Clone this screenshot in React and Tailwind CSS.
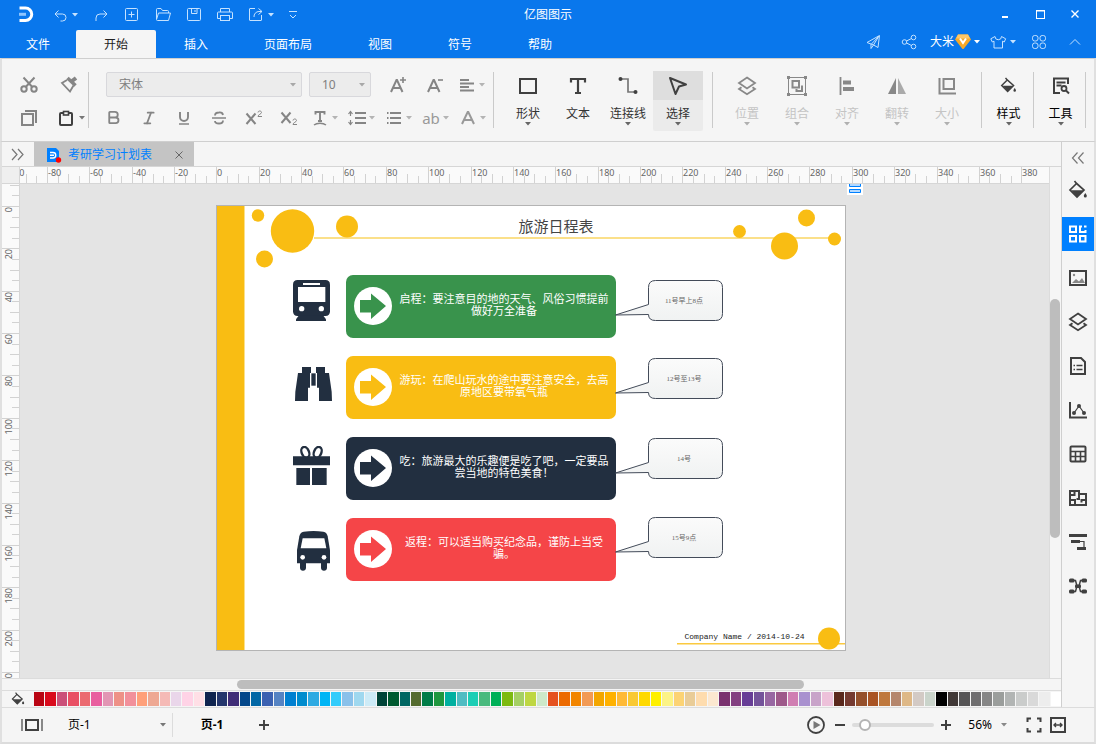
import { useState } from "react";
import { Bold, Italic, Type } from "lucide-react";

const Icon = ({ size = 20, w, h, sw = 1, children }) => (
  <svg
    width={w || size}
    height={h || size}
    viewBox={`0 0 ${w || size} ${h || size}`}
    fill="none"
    stroke="currentColor"
    strokeWidth={sw}
    className="shrink-0"
    aria-hidden="true"
  >
    {children}
  </svg>
);

const Caret = () => (
  <svg width="6" height="4" viewBox="0 0 6 4" className="shrink-0" aria-hidden="true">
    <path d="M0 0h6L3 3.6z" fill="currentColor" />
  </svg>
);

const BucketIcon = ({ size = 20 }) => (
  <svg width={size} height={size} viewBox="0 0 20 20" fill="none" className="shrink-0" aria-hidden="true">
    <path d="M6.500 1l2 2.500M7.500 2.500 16 10 9 17 2 10l6.500-6.500" stroke="currentColor" strokeWidth="1.7" />
    <path d="M3 10.200h12.500L9 17z" fill="currentColor" />
    <path d="M17.300 13c1 1.400 1.500 2 1.500 2.900a1.500 1.500 0 0 1-3 0c0-.9.5-1.500 1.500-2.900z" fill="currentColor" />
  </svg>
);

const LayersIcon = () => (
  <Icon sw={1.8}>
    <path d="M10 1.500 18 7l-8 5.500L2 7z" />
    <path d="M4.500 11.200 2 13l8 5.200L18 13l-2.500-1.800" />
  </Icon>
);

const quickButtons = [
  { label: "撤销", caret: true, icon: <Icon><path d="M8.500 5.500 5 9l3.500 3.500M5 9h7.500a3.500 3.500 0 0 1 0 7h-2" /></Icon> },
  { label: "恢复", icon: <Icon><path d="M12.500 5.500 16 9l-3.500 3.500M16 9H9a4 4 0 0 0-4 4v3" /></Icon> },
  { label: "新建", icon: <Icon><rect x="3.500" y="3.500" width="12" height="12" rx="1" /><path d="M9.500 6.500v6M6.500 9.500h6" /></Icon> },
  { label: "打开", icon: <Icon><path d="M3.500 14V4.500a1 1 0 0 1 1-1h3.500l1.500 2h5a1 1 0 0 1 1 1V8M3.500 14.500l2-6.500h12l-2 7.500h-11a1 1 0 0 1-1-1z" /></Icon> },
  { label: "保存", icon: <Icon><rect x="3.500" y="3.500" width="13" height="12" rx="1" /><path d="M7.500 3.500v5h5.500v-5M11 5v2" /></Icon> },
  { label: "打印", icon: <Icon><path d="M5.500 7V3.500h9V7M5.500 13.500h-3V8a1 1 0 0 1 1-1h13a1 1 0 0 1 1 1v5.500h-3" /><rect x="5.500" y="10.500" width="9" height="5" /></Icon> },
  { label: "导出", caret: true, icon: <Icon><path d="M9 3.500H4a.5.5 0 0 0-.5.5v11a.5.5 0 0 0 .5.5h11a.5.5 0 0 0 .5-.5v-5" /><path d="M12.500 3.500 16 6.500l-3.500 3M16 6.500h-3A5 5 0 0 0 8 12" /></Icon> },
];

const menuTabs = [
  { name: "文件", width: "w-[76px]" },
  { name: "开始", width: "w-[80px]" },
  { name: "插入", width: "w-[80px]" },
  { name: "页面布局", width: "w-[104px]" },
  { name: "视图", width: "w-[80px]" },
  { name: "符号", width: "w-[80px]" },
  { name: "帮助", width: "w-[80px]" },
];

const TitleBar = () => (
  <div className="grid h-[30px] grid-cols-[1fr_auto_1fr] items-center">
    <div className="flex items-center gap-[11px] pl-4 text-[#c5e2ff]">
      <div className="w-[23px]">
        <Icon size={20}>
          <path d="M3.500 3H9.500a6 6 0 0 1 0 12.500H3.500" stroke="#fff" strokeWidth="3" />
          <path d="M3 9.300h7" stroke="#8ec5ff" strokeWidth="3" />
        </Icon>
      </div>
      {quickButtons.map((b) => (
        <button key={b.label} aria-label={b.label} className="flex items-center">
          {b.icon}
          {b.caret && <span className="flex w-[10px] justify-center"><Caret /></span>}
        </button>
      ))}
      <button aria-label="更多" className="w-3">
        <Icon size={12}><path d="M2 2.500h8M3 6l3 3 3-3" /></Icon>
      </button>
    </div>
    <h1 className="text-xs text-white">亿图图示</h1>
    <div className="flex justify-end pr-1 text-white">
      <button aria-label="最小化" className="flex w-[35px] justify-center">
        <Icon size={12} sw={2}><path d="M3 8h6" /></Icon>
      </button>
      <button aria-label="最大化" className="flex w-[35px] justify-center">
        <Icon size={12}><rect x="2.500" y="1.500" width="8" height="8" /><path d="M2 2h9" /></Icon>
      </button>
      <button aria-label="关闭" className="flex w-[35px] justify-center">
        <Icon size={12} sw={1.4}><path d="M2.500 1.500l7 7M9.500 1.500l-7 7" /></Icon>
      </button>
    </div>
  </div>
);

const MenuBar = ({ active, onSelect }) => (
  <div className="flex h-7 justify-between">
    <nav className="flex">
      {menuTabs.map((t) => (
        <button
          key={t.name}
          onClick={() => onSelect(t.name)}
          className={`${t.width} pt-0.5 text-xs ${active === t.name ? "rounded-t-[2px] bg-[#f5f5f5] text-[#222]" : "text-white"}`}
        >
          {t.name}
        </button>
      ))}
    </nav>
    <div className="flex h-6 items-center pr-[3px] text-[#c5e2ff]">
      <button aria-label="发送" className="flex w-9 justify-center">
        <Icon><path d="M4 10.500 16.500 3.500 15 15.500l-4.500-2.500zM8 12.500v4l2.500-3.500L16 4 8 12.500" /></Icon>
      </button>
      <button aria-label="分享" className="flex w-9 justify-center">
        <Icon><circle cx="5.500" cy="10" r="2.300" /><circle cx="14.500" cy="5.500" r="2.300" /><circle cx="14.500" cy="14.500" r="2.300" /><path d="M7.500 9l5-2.500M7.500 11l5 2.500" /></Icon>
      </button>
      <button className="flex w-[58px] items-center justify-center text-xs text-white">
        大米
        <svg width="18" height="16" viewBox="0 0 18 16" aria-hidden="true">
          <path d="M4 .5h10l3 5L9.500 15h-1L1 5.500z" fill="#f7a928" />
          <path d="M4 .5h10l2 4H2z" fill="#ffc766" />
          <path d="M6 4.500l3 4.500 3-4.500" stroke="#fff" strokeWidth="2" fill="none" />
        </svg>
        <span className="flex w-[10px] justify-center"><Caret /></span>
      </button>
      <button aria-label="皮肤" className="flex w-9 items-center justify-center">
        <Icon><path d="M7 4.500 2.800 6.800l1.500 3.200 1.700-.8v6.800h8.500V9.200l1.700.8 1.500-3.200-4.200-2.300a3.200 3.200 0 0 1-6.500 0z" /></Icon>
        <span className="flex w-[10px] justify-center"><Caret /></span>
      </button>
      <button aria-label="应用" className="flex w-9 justify-center">
        <Icon>
          <rect x="3.500" y="3.500" width="5.500" height="5.500" rx="2.200" />
          <rect x="11" y="3.500" width="5.500" height="5.500" rx="2.200" />
          <rect x="3.500" y="11" width="5.500" height="5.500" rx="2.200" />
          <rect x="11" y="11" width="5.500" height="5.500" rx="2.200" />
        </Icon>
      </button>
      <button aria-label="收起" className="flex w-9 justify-center">
        <Icon><path d="M5 12.500l5-5 5 5" /></Icon>
      </button>
    </div>
  </div>
);

const Separator = () => <div className="mt-[13px] h-14 w-px shrink-0 bg-[#cacaca]" />;

const FormatButton = ({ label, children }) => (
  <button aria-label={label} className="flex w-[35px] justify-center">{children}</button>
);

const DropButton = ({ label, children }) => (
  <button aria-label={label} className="flex w-[37px] items-center">
    <span className="flex w-6 justify-center">{children}</span>
    <span className="text-[#b4b4b4]"><Caret /></span>
  </button>
);

const SelectBox = ({ label, width, options }) => (
  <div className={`relative flex h-[25px] items-center ${width}`}>
    <select
      aria-label={label}
      className="h-full w-full appearance-none rounded-[2px] border border-[#d8d8dc] bg-[#ececec] pl-3 text-xs text-[#808080]"
    >
      {options.map((o) => <option key={o}>{o}</option>)}
    </select>
    <span className="pointer-events-none absolute right-[6px] text-[#a8a8a8]"><Caret /></span>
  </div>
);

const Tool = ({ label, icon, caret = true, active, tone = "text-[#333]", iconTone = "text-[#404040]", width = "w-[50px]" }) => (
  <button className={`mt-3 flex h-[60px] flex-col items-center rounded-[2px] ${width} ${active ? "bg-[#ebebeb]" : ""}`}>
    <span className={`flex h-[29px] w-full items-center justify-center ${iconTone} ${active ? "bg-[#dedede]" : ""}`}>{icon}</span>
    <span className={`mt-[5px] h-[17px] text-xs leading-[18px] ${tone}`}>{label}</span>
    {caret && <span className={tone === "text-[#c4c4c4]" ? "text-[#b0b0b0]" : "text-[#666]"}><Caret /></span>}
  </button>
);

const drawTools = [
  { label: "形状", icon: <Icon sw={2}><rect x="2" y="3" width="16" height="14" /></Icon> },
  { label: "文本", caret: false, icon: <Icon sw={2.2}><path d="M3 6.500V3h14v3.500M10 3v14M7 17h6" /></Icon> },
  {
    label: "连接线",
    icon: <Icon sw={1.7}><path d="M4 3h6v13h6" stroke="#777" /><circle cx="2.500" cy="3" r="2" fill="currentColor" stroke="none" /><circle cx="17.500" cy="16" r="2" fill="currentColor" stroke="none" /></Icon>,
  },
  { label: "选择", active: true, icon: <Icon sw={2}><path d="M2 2l16 6.500-7 2L7.500 18z" strokeLinejoin="round" /></Icon> },
];

const arrangeTools = [
  { label: "位置", icon: <LayersIcon /> },
  {
    label: "组合",
    icon: <Icon><rect x="1.500" y="1.500" width="17" height="17" /><path d="M0 0h3v3H0zM17 0h3v3h-3zM0 17h3v3H0zM17 17h3v3h-3z" fill="currentColor" stroke="none" /><path d="M5.500 5h6.500v6.500H5.500zM15 9.500V15H9.500v-2" strokeWidth="2" /></Icon>,
  },
  { label: "对齐", icon: <Icon sw={1.8}><path d="M3.500 1v18" /><path d="M6 6.500h8M6 13h11" strokeWidth="4" /></Icon> },
  { label: "翻转", icon: <Icon><path d="M9 2v16H1z" fill="currentColor" stroke="none" /><path d="M11 2v16h8z" fill="#aaa" stroke="none" /></Icon> },
  { label: "大小", icon: <Icon sw={2}><path d="M2.500 2v15.500H19" /><path d="M6.500 3H17v10H6.500z" /></Icon> },
];

const Ribbon = () => (
  <div className="flex h-[84px] border-x-2 border-t border-b border-x-[#e0e0e0] border-t-[#cfcfcf] border-b-[#cfcfcf] bg-[#f5f5f5]">
    <div className="flex flex-col pt-[9px] pl-[7px] text-[#858585]">
      <div className="flex h-[33px] items-center">
        <button aria-label="剪切" className="flex w-10 justify-center">
          <Icon sw={2}><circle cx="5" cy="14" r="2.700" /><circle cx="15" cy="14" r="2.700" /><path d="M4.500 2.500l8.800 9.500M15.500 2.500 6.700 12" /></Icon>
        </button>
        <button aria-label="格式刷" className="flex w-[39px] justify-center">
          <Icon sw={1.8}><path d="M17 3l-4 3" strokeWidth="4" /><path d="M8.500 3l8 7.500" strokeWidth="3.500" /><path d="M8 5 3 8l8 8.500 3.500-6" /></Icon>
        </button>
      </div>
      <div className="flex h-[33px] items-center">
        <button aria-label="复制" className="flex w-10 justify-center">
          <Icon sw={2}><rect x="3" y="6" width="11" height="11" /><path d="M6 3h11v12" /></Icon>
        </button>
        <button aria-label="粘贴" className="flex w-[39px] items-center justify-end text-[#404040]">
          <Icon sw={2}><rect x="4" y="5" width="12" height="12" rx="1" /><rect x="7.500" y="3.500" width="5" height="3.500" fill="#f5f5f5" strokeWidth="1.600" /></Icon>
          <span className="flex w-3 justify-center text-[#777]"><Caret /></span>
        </button>
      </div>
    </div>
    <Separator />
    <div className="flex flex-col pt-[9px] pl-[7px] text-[#858585]">
      <div className="flex h-[33px] items-center pl-[10px]">
        <SelectBox label="字体" width="w-[196px]" options={["宋体"]} />
        <div className="w-[7px]" />
        <SelectBox label="字号" width="w-[62px]" options={["10"]} />
        <div className="flex items-center pl-2">
          <button aria-label="增大字号" className="flex w-[37px] justify-center">
            <Icon sw={2}><path d="M3 17 8.500 5h.5l5.500 12M5 13h7.500" /><path d="M15 2v6M12 5h6" strokeWidth="1.600" /></Icon>
          </button>
          <button aria-label="减小字号" className="flex w-[37px] justify-center">
            <Icon sw={2}><path d="M3 17 8.500 5h.5l5.500 12M5 13h7.500" /><path d="M13 5h5" strokeWidth="1.600" /></Icon>
          </button>
          <div className="w-0.5" />
          <DropButton label="对齐方式">
            <Icon sw={1.8}><path d="M3 5h9M3 8.500h14M3 12h9M3 15.500h14" /></Icon>
          </DropButton>
        </div>
      </div>
      <div className="flex h-[33px] items-center">
        <FormatButton label="加粗"><Bold size={17} strokeWidth={2.6} /></FormatButton>
        <FormatButton label="斜体"><Italic size={16} strokeWidth={2.6} /></FormatButton>
        <FormatButton label="下划线">
          <Icon sw={1.9}><path d="M6 4v5a4 4 0 0 0 8 0V4" /><path d="M5 16h10" strokeWidth="1.500" /></Icon>
        </FormatButton>
        <FormatButton label="删除线">
          <Icon sw={1.8}><path d="M14 7a3.500 3 0 0 0-4-2.500c-3 0-4 1.500-4 3M14 12.500c0 2-1.500 3-4 3s-4-1-4-2.500" /><path d="M3 10h14" strokeWidth="1.500" /></Icon>
        </FormatButton>
        <FormatButton label="上标">
          <Icon sw={2}><path d="M2.500 5.500l9 10.500M11.500 5.500l-9 10.500" /><path d="M14 4.500c0-2 3.500-2 3.500 0 0 1.500-3.500 2-3.500 4h4" strokeWidth="1" /></Icon>
        </FormatButton>
        <FormatButton label="下标">
          <Icon sw={2}><path d="M2.500 4.500l9 10.500M11.500 4.500l-9 10.500" /><path d="M14 12.500c0-2 3.500-2 3.500 0 0 1.500-3.500 2-3.500 4h4" strokeWidth="1" /></Icon>
        </FormatButton>
        <div className="w-0.5" />
        <DropButton label="文字方向">
          <Icon sw={1.9}><path d="M5.500 6.500V4h9v2.500M10 4v9M8 13h4" /><path d="M4 17c3-2.300 9-2.300 12 0" strokeWidth="1.500" /></Icon>
        </DropButton>
        <DropButton label="行距">
          <Icon sw={1.9}><path d="M8 5h11M8 10h11M8 15h11" /><path d="M3.500 4v4M3.500 12v4.500M1.500 6l2-2.500 2 2.500M1.500 14l2 2.500 2-2.500" strokeWidth="1.200" /></Icon>
        </DropButton>
        <DropButton label="项目符号">
          <Icon sw={1.9}><path d="M6 5h11M6 10h11M6 15h11M3 5h1.500M3 10h1.500M3 15h1.500" /></Icon>
        </DropButton>
        <DropButton label="文字高亮"><span className="text-[15px] leading-5 text-[#999]">ab</span></DropButton>
        <DropButton label="字体颜色">
          <Icon sw={2}><path d="M4 16 9.700 4h.6L16 16M6.500 12h7" stroke="#999" /></Icon>
        </DropButton>
      </div>
    </div>
    <Separator />
    <div className="flex px-[9px]">
      {drawTools.map((t) => <Tool key={t.label} {...t} />)}
    </div>
    <Separator />
    <div className="flex px-[9px]">
      {arrangeTools.map((t) => <Tool key={t.label} {...t} tone="text-[#c4c4c4]" iconTone="text-[#888]" />)}
    </div>
    <Separator />
    <Tool label="样式" icon={<BucketIcon size={17} />} tone="text-black" width="w-[51px] pl-0.5" />
    <Separator />
    <Tool
      label="工具"
      tone="text-black"
      width="w-[51px] pl-0.5"
      icon={<Icon sw={2}><path d="M17 8V2.500H3V17h6M5.500 6.500h9M5.500 9.500h5" /><circle cx="13" cy="12.500" r="2.500" strokeWidth="1.800" /><path d="M15 14.500l3 3" /></Icon>}
    />
    <Separator />
  </div>
);

// pixels per 5 ruler units
const STEP = 10.59;

const HorizontalRuler = () => {
  const ticks = Array.from({ length: 97 }, (_, i) => i - 20);
  return (
    <svg className="h-4 w-full min-w-0 flex-1 bg-[#fafafa] font-['Noto_Sans']" aria-hidden="true">
      {ticks.map((k) => {
        const x = Math.round(196.4 + k * STEP);
        const h = k % 4 === 0 ? 16 : k % 2 === 0 ? 9 : 7;
        return (
          <g key={k}>
            <rect x={x} y={16 - h} width="1" height={h} fill="#d2d2d2" />
            {k % 4 === 0 && <text x={x + 1} y="9" fontSize="9" fill="#666">{k * 5}</text>}
          </g>
        );
      })}
    </svg>
  );
};

const VerticalRuler = () => {
  const ticks = Array.from({ length: 47 }, (_, i) => i - 2);
  return (
    <svg className="h-full w-[17px] bg-[#fafafa] font-['Noto_Sans']" aria-hidden="true">
      {ticks.map((k) => {
        const y = Math.round(22 + k * STEP);
        const w = k % 4 === 0 ? 17 : k % 2 === 0 ? 9 : 7;
        return (
          <g key={k}>
            <rect x={17 - w} y={y} width={w} height="1" fill="#d2d2d2" />
            {k % 4 === 0 && (
              <text transform={`translate(10 ${y + 1}) rotate(-90)`} textAnchor="end" fontSize="9" fill="#666">{k * 5}</text>
            )}
          </g>
        );
      })}
    </svg>
  );
};

const TrainIcon = () => (
  <svg width="37" height="41" viewBox="0 0 111 123" className="absolute top-[74px] left-[76px]" fill="#222f40">
    <path d="M14 0h83q14 0 14 14v80q0 14-14 14H14Q0 108 0 94V14Q0 0 14 0z" />
    <path d="M18 106h72l9 12v5H9v-5z" />
    <path d="M30 9h51v6H30zM15 21h82v45H15z" fill="#fff" />
    <circle cx="26" cy="86" r="8" fill="#fff" />
    <circle cx="85" cy="86" r="8" fill="#fff" />
  </svg>
);

const BinocularsIcon = () => (
  <svg width="37" height="34" viewBox="0 0 111 102" className="absolute top-[161px] left-[78px]" fill="#222f40">
    <path d="M21 0h27v18h-3v44h-6v40H0l1-28L9 18h12zM90 0H63v18h3v44h6v40h39l-1-28-8-56H90z" />
    <path d="M48 18h15v39H48z" stroke="#fff" strokeWidth="2" />
  </svg>
);

const GiftIcon = () => (
  <svg width="37" height="39" viewBox="0 0 111 117" className="absolute top-[240px] left-[76px]" fill="#222f40">
    <path d="M0 31h111v27H0zM10 66h41v51H10zM57 66h44v51H57z" />
    <g fill="none" stroke="#222f40" strokeWidth="7">
      <ellipse cx="37" cy="19" rx="11" ry="17" transform="rotate(-22 37 19)" />
      <ellipse cx="74" cy="19" rx="11" ry="17" transform="rotate(22 74 19)" />
    </g>
  </svg>
);

const BusIcon = () => (
  <svg width="33" height="40" viewBox="0 0 99 120" className="absolute top-[325px] left-[80px]" fill="#222f40">
    <path d="M20 2Q50-2 79 2q11 2 13 14l7 42v39H0V58L7 16Q9 4 20 2z" />
    <path d="M9 95h18v16q-1 8-9 8t-9-8zM72 95h18v16q-1 8-9 8t-9-8z" />
    <path d="M17 22h65l6 30H11z" fill="#fff" />
    <circle cx="17" cy="79" r="7" fill="#fff" />
    <circle cx="81" cy="79" r="7" fill="#fff" />
  </svg>
);

const steps = [
  { text: "启程：要注意目的地的天气、风俗习惯提前\n做好万全准备", place: "top-[69px]", bg: "bg-[#39934c]", fg: "text-[#39934c]" },
  { text: "游玩：在爬山玩水的途中要注意安全，去高\n原地区要带氧气瓶", place: "top-[150px]", bg: "bg-[#f9bd13]", fg: "text-[#f9bd13]" },
  { text: "吃：旅游最大的乐趣便是吃了吧，一定要品\n尝当地的特色美食！", place: "top-[231px]", bg: "bg-[#222f40]", fg: "text-[#222f40]" },
  { text: "返程：可以适当购买纪念品，谨防上当受\n骗。", place: "top-[312px]", bg: "bg-[#f54548]", fg: "text-[#f54548]" },
];

const callouts = [
  { text: "11号早上8点", place: "top-[74px]" },
  { text: "12号至13号", place: "top-[152px]" },
  { text: "14号", place: "top-[232px]" },
  { text: "15号9点", place: "top-[311px]" },
];

const Page = () => (
  <div className="absolute top-[21px] left-[196px] h-[446px] w-[630px] border border-[#b4b4b4] bg-white">
    <svg className="absolute inset-0" width="628" height="444" fill="#f9bd13" aria-hidden="true">
      <rect width="27" height="444" />
      <rect x="27" width="1" height="444" fill="#fbe08a" />
      <rect x="97" y="31" width="520" height="2" fill="#fbe08a" />
      <circle cx="41" cy="9.500" r="6.200" />
      <circle cx="75.500" cy="25" r="21.700" />
      <circle cx="130" cy="20.500" r="11" />
      <circle cx="47.500" cy="53" r="8.500" />
      <circle cx="522.500" cy="25.500" r="6.400" />
      <circle cx="589.500" cy="12" r="8.500" />
      <circle cx="567.500" cy="40" r="13.500" />
      <circle cx="617.500" cy="33" r="6.500" />
      <rect x="460" y="437" width="168" height="1.500" fill="#fbc93f" />
      <circle cx="612" cy="432.500" r="11" />
    </svg>
    <h2 className="absolute top-[10px] left-[278px] w-[122px] text-center text-[15px] leading-5 text-[#444]">旅游日程表</h2>
    <TrainIcon />
    <BinocularsIcon />
    <GiftIcon />
    <BusIcon />
    {steps.map((s) => (
      <div key={s.text} className={`absolute left-[129px] flex h-[63px] w-[270px] items-center rounded-[7px] pb-px pl-2 ${s.place} ${s.bg} ${s.fg}`}>
        <svg width="38" height="38" viewBox="0 0 38 38" className="shrink-0" aria-hidden="true">
          <circle cx="19" cy="19" r="19" fill="#fff" />
          <path d="M6 13h11V6.500L32 19 17 32v-6.500H6z" fill="currentColor" />
        </svg>
        <p className="flex-1 pb-[2px] text-center text-[11px] leading-3 whitespace-pre text-white">{s.text}</p>
      </div>
    ))}
    <svg width="0" height="0" className="absolute" aria-hidden="true">
      <defs>
        <linearGradient id="callout" x1="0" y1="0" x2="0" y2="1">
          <stop offset="0" stopColor="#fbfbfb" />
          <stop offset="1" stopColor="#f0f2f2" />
        </linearGradient>
      </defs>
    </svg>
    {callouts.map((c) => (
      <div key={c.text} className={`absolute left-[398px] flex h-[42px] w-[109px] ${c.place}`}>
        <svg width="109" height="42" viewBox="0 0 109 42" className="absolute inset-0" aria-hidden="true">
          <path
            d="M40.500.5h60q7 0 7 7v26q0 7-7 7h-60q-7 0-7-6L.5 35l33-10.500v-17q0-7 7-7z"
            fill="url(#callout)"
            stroke="#434b59"
          />
        </svg>
        <span className="relative ml-8 flex w-[74px] items-center justify-center font-['Liberation_Serif','Noto_Sans_CJK_SC',serif] text-[7px] text-[#666]">
          {c.text}
        </span>
      </div>
    ))}
    <p className="absolute top-[426px] left-[460px] w-[135px] text-center font-['Liberation_Mono',monospace] text-[8px] leading-[10px] whitespace-nowrap text-[#222]">
      Company Name / 2014-10-24
    </p>
  </div>
);

const Canvas = () => (
  <div className="relative min-w-0 flex-1 overflow-hidden bg-[#e4e4e4]">
    <Page />
    <button aria-label="浮动面板" className="absolute top-0 left-[827px] bg-white">
      <Icon w={16} h={11}><path d="M2.500 0v2.500h11V0M2.500 5.500h11v3h-11z" stroke="#0080ff" fill="#b3d9ff" /></Icon>
    </button>
  </div>
);

const palette = [
  "#b90513", "#d90a1c", "#cb5079", "#e95064", "#eb6a70", "#e95f9f", "#e296b4", "#ee9187", "#f2909b", "#ffa07a",
  "#eea893", "#f5bab6", "#ead6ea", "#ffd3e6", "#ffdfe6", "#0f244f", "#24366c", "#402d77", "#04478a", "#0367a5",
  "#3b61b1", "#5583c3", "#0080d1", "#008cce", "#2eaae2", "#00b5f5", "#33ccfb", "#8ac1ea", "#9fd8ef", "#cdebf7",
  "#004438", "#005a30", "#006662", "#556b2f", "#007d48", "#1f973f", "#00b0a0", "#4fbcc2", "#1cceb5", "#4aba7e",
  "#00b058", "#7dba11", "#a5d064", "#bed742", "#cde8c9", "#e5511f", "#ec6a00", "#f28500", "#f29a54", "#f3a600",
  "#ffb100", "#ffba36", "#f9c933", "#ffd900", "#fff000", "#fcf386", "#fcd374", "#e9cc97", "#fedcae", "#fce8d0",
  "#7a326f", "#834081", "#673d96", "#74539a", "#9867a2", "#9e598a", "#d07eb2", "#a991cf", "#c8a3c9", "#edc1da",
  "#5a281c", "#753a30", "#95502b", "#a95424", "#bf783d", "#b5866c", "#deb887", "#d3cac5", "#cad4cb", "#000000",
  "#403836", "#565556", "#6f6e6f", "#868686", "#9b9e9c", "#b2b5b4", "#cacccb", "#d9d9d9", "#ededed", "#ffffff",
];

const Palette = () => (
  <div className="flex h-[17px] items-center border-t border-[#dcdcdc] bg-[#f5f5f5]">
    <span className="flex w-8 justify-center text-[#404040]"><BucketIcon size={14} /></span>
    <div className="flex flex-1 gap-px">
      {palette.map((c) => (
        <button key={c} aria-label={c} className="h-[14px] flex-1" style={{ backgroundColor: c }} />
      ))}
    </div>
  </div>
);

const panels = [
  { label: "填充", icon: <BucketIcon size={20} /> },
  { label: "符号库", icon: <Icon sw={2}><path d="M2 2.500h6v5.500H2zM2 12h6v5.500H2zM12 12h5.500v5.500H12zM14 2.500h-2V8h5.500V6M16 2.500h2.500" /></Icon> },
  { label: "图片", icon: <Icon sw={2}><rect x="2" y="3" width="16" height="14" /><path d="M4 15l4-4 3 2.500 3-3.500 3 5z" fill="#888" stroke="none" /><circle cx="6" cy="7" r="1.200" fill="#888" stroke="none" /></Icon> },
  { label: "图层", icon: <LayersIcon /> },
  { label: "备注", icon: <Icon sw={2}><path d="M3 2h10l4 4v12H3z" /><path d="M5.500 9.500h1.500M8.500 9.500h6M5.500 13.500h1.500M8.500 13.500h6" strokeWidth="1.700" /></Icon> },
  { label: "图表", icon: <Icon sw={2}><path d="M2 2v15.500h17" /><path d="M6 13l5-7 5 7" strokeWidth="1.200" /><g fill="currentColor" stroke="none"><circle cx="6" cy="13" r="2" /><circle cx="11" cy="6" r="2" /><circle cx="16" cy="13" r="2" /></g></Icon> },
  { label: "表格", icon: <Icon sw={2}><rect x="2.500" y="2.500" width="15" height="15" rx="1" /><path d="M2 7.500h16M2 12.500h16M7.500 7.500v10M12.500 7.500v10" strokeWidth="1.600" /></Icon> },
  { label: "平面图", icon: <Icon sw={2}><path d="M11 6V3H2v14h16V6h-7M6.500 3v4H2M2 12h5v5M11 6v5H8.500M18 12h-4.500v2.500" /></Icon> },
  { label: "甘特图", icon: <Icon sw={3}><path d="M1 3.500h18" /><path d="M3 9.500h9M9 16.500h9" /><path d="M12 9.500h4v6" strokeWidth="1.200" /></Icon> },
  { label: "导图", icon: <Icon sw={1.5}><path d="M6 4.500h1.500L9 10l-1.500 5.500H6M14 4.500h-1.500L11 10l1.500 5.500H14" /><g fill="currentColor" stroke="none"><rect x="1" y="2.500" width="5.500" height="4" rx="1.500" /><rect x="13.500" y="2.500" width="5.500" height="4" rx="1.500" /><rect x="1" y="13.500" width="5.500" height="4" rx="1.500" /><rect x="13.500" y="13.500" width="5.500" height="4" rx="1.500" /><rect x="7" y="8.500" width="6" height="3.500" rx="1" /></g></Icon> },
];

const Sidebar = () => {
  const [open, setOpen] = useState("符号库");
  return (
    <aside className="flex w-[33px] shrink-0 flex-col gap-[10px] border-l border-[#cfcfcf] bg-[#f5f5f5] text-[#404040]">
      <button aria-label="展开面板" className="-mb-[10px] flex h-[31px] items-center justify-center text-[#777]">
        <Icon sw={1.2}><path d="M9.500 4.500 4.500 10l5 5.500M15.500 4.500l-5 5.500 5 5.500" /></Icon>
      </button>
      {panels.map((p) => (
        <button
          key={p.label}
          aria-label={p.label}
          onClick={() => setOpen(p.label)}
          className={`flex h-[34px] items-center justify-center ${open === p.label ? "bg-[#0080ff] text-white" : ""}`}
        >
          {p.icon}
        </button>
      ))}
    </aside>
  );
};

const DocumentTabs = () => (
  <div className="flex h-[25px] border-b border-[#d6d6d6] bg-[#f5f5f5]">
    <button aria-label="展开符号库" className="flex w-8 items-center justify-center text-[#777]">
      <Icon sw={1.2}><path d="M4 5l5 5.500L4 16M10 5l5 5.500L10 16" /></Icon>
    </button>
    <div className="flex w-[160px] items-center bg-[#c4c4c4] pt-px pl-3 text-xs text-[#0080ff]">
      <svg width="16" height="16" viewBox="0 0 16 16" className="mr-[6px]" aria-hidden="true">
        <path d="M1 1h9l3 3v11H1z" fill="#0080ff" />
        <path d="M4 5.500h3a2.500 2.500 0 0 1 0 5.500H4M4 8.200h4" stroke="#fff" strokeWidth="1.400" fill="none" />
        <circle cx="12.500" cy="13" r="2.700" fill="#f00" />
      </svg>
      <span>考研学习计划表</span>
      <button aria-label="关闭标签" className="ml-[21px] text-[#666]">
        <Icon size={12} sw={1}><path d="M2.500 2.500l7 7M9.500 2.500l-7 7" /></Icon>
      </button>
    </div>
  </div>
);

const StatusBar = () => {
  const [zoom, setZoom] = useState(10);
  return (
    <footer className="flex h-[37px] items-center justify-between border-x-2 border-t border-b-2 border-x-[#e0e0e0] border-t-[#dcdcdc] border-b-[#dcdcdc] bg-[#f5f5f5] text-[#404040]">
      <div className="flex items-center">
        <button aria-label="页面视图" className="flex w-[60px] justify-center">
          <Icon w={22} h={16} sw={2}><rect x="5" y="3" width="12" height="10" /><path d="M1 2v12M21 2v12" stroke="#888" /></Icon>
        </button>
        <div className="relative flex w-[110px] items-center">
          <select aria-label="页面" className="w-full appearance-none bg-transparent pl-[6px] text-xs text-black">
            <option>页-1</option>
          </select>
          <span className="pointer-events-none absolute right-[6px] text-[#777]"><Caret /></span>
        </div>
        <div className="h-6 w-px bg-[#dcdcdc]" />
        <button className="w-[78px] text-xs font-bold text-black">页-1</button>
        <button aria-label="添加页" className="flex w-[26px] justify-center">
          <Icon size={12} sw={1.9}><path d="M6 1v10M1 6h10" /></Icon>
        </button>
      </div>
      <div className="flex items-center pr-[26px]">
        <button aria-label="播放">
          <Icon sw={1.8}><circle cx="10" cy="10" r="8" /><path d="M7.500 6l7 4-7 4z" fill="#777" stroke="none" /></Icon>
        </button>
        <button aria-label="缩小" className="ml-2">
          <Icon size={12} sw={2}><path d="M1 6h10" /></Icon>
        </button>
        <input
          type="range"
          aria-label="缩放"
          value={zoom}
          onChange={(e) => setZoom(e.target.value)}
          className="mx-[6px] h-1 w-[82px] appearance-none rounded-full bg-[#dcdcdc] [&::-webkit-slider-thumb]:h-3 [&::-webkit-slider-thumb]:w-3 [&::-webkit-slider-thumb]:appearance-none [&::-webkit-slider-thumb]:rounded-full [&::-webkit-slider-thumb]:border-2 [&::-webkit-slider-thumb]:border-[#b4b4b4] [&::-webkit-slider-thumb]:bg-white"
        />
        <button aria-label="放大">
          <Icon size={12} sw={2}><path d="M6 1v10M1 6h10" /></Icon>
        </button>
        <button className="ml-4 flex items-center gap-[9px] text-xs text-black">
          56%
          <span className="text-[#888]"><Caret /></span>
        </button>
        <button aria-label="全屏" className="ml-[17px]">
          <Icon sw={2}><path d="M7 3.500H3.500V7M13 3.500h3.500V7M7 16.500H3.500V13M13 16.500h3.500V13" /></Icon>
        </button>
        <button aria-label="适应宽度" className="ml-1">
          <Icon sw={2}><rect x="3" y="3" width="14" height="14" /><path d="M6 10h8M8 8l-2 2 2 2M12 8l2 2-2 2" strokeWidth="1.400" /></Icon>
        </button>
      </div>
    </footer>
  );
};

const App = () => {
  const [activeTab, setActiveTab] = useState("开始");

  return (
    <div className="flex h-screen flex-col overflow-hidden bg-[#f5f5f5] font-['Noto_Sans','Noto_Sans_CJK_SC',sans-serif] select-none">
      <header className="bg-[#0977ec]">
        <TitleBar />
        <MenuBar active={activeTab} onSelect={setActiveTab} />
      </header>

      <Ribbon />

      <main className="flex min-h-0 flex-1 border-x-2 border-[#e0e0e0]">
        <div className="flex min-w-0 flex-1 flex-col">
          <DocumentTabs />
          <div className="flex min-h-0 flex-1">
            <div className="flex min-w-0 flex-1 flex-col">
              <div className="flex h-[17px] border-b border-[#d6d6d6]">
                <div className="w-[18px] border-r border-[#d6d6d6] bg-[#efefef]" />
                <HorizontalRuler />
              </div>
              <div className="flex min-h-0 flex-1">
                <div className="w-[18px] border-r border-[#d6d6d6]"><VerticalRuler /></div>
                <Canvas />
              </div>
            </div>
            <div className="w-3 border-l border-[#dcdcdc] pt-[132px]">
              <div className="h-[239px] w-[10px] rounded-full bg-[#bdbdbd]" />
            </div>
          </div>
          <div className="h-3 border-t border-[#dcdcdc] pt-px pl-[235px]">
            <div className="h-[9px] w-[567px] rounded-full bg-[#bdbdbd]" />
          </div>
          <Palette />
        </div>
        <Sidebar />
      </main>

      <StatusBar />
    </div>
  );
};

export default App;
